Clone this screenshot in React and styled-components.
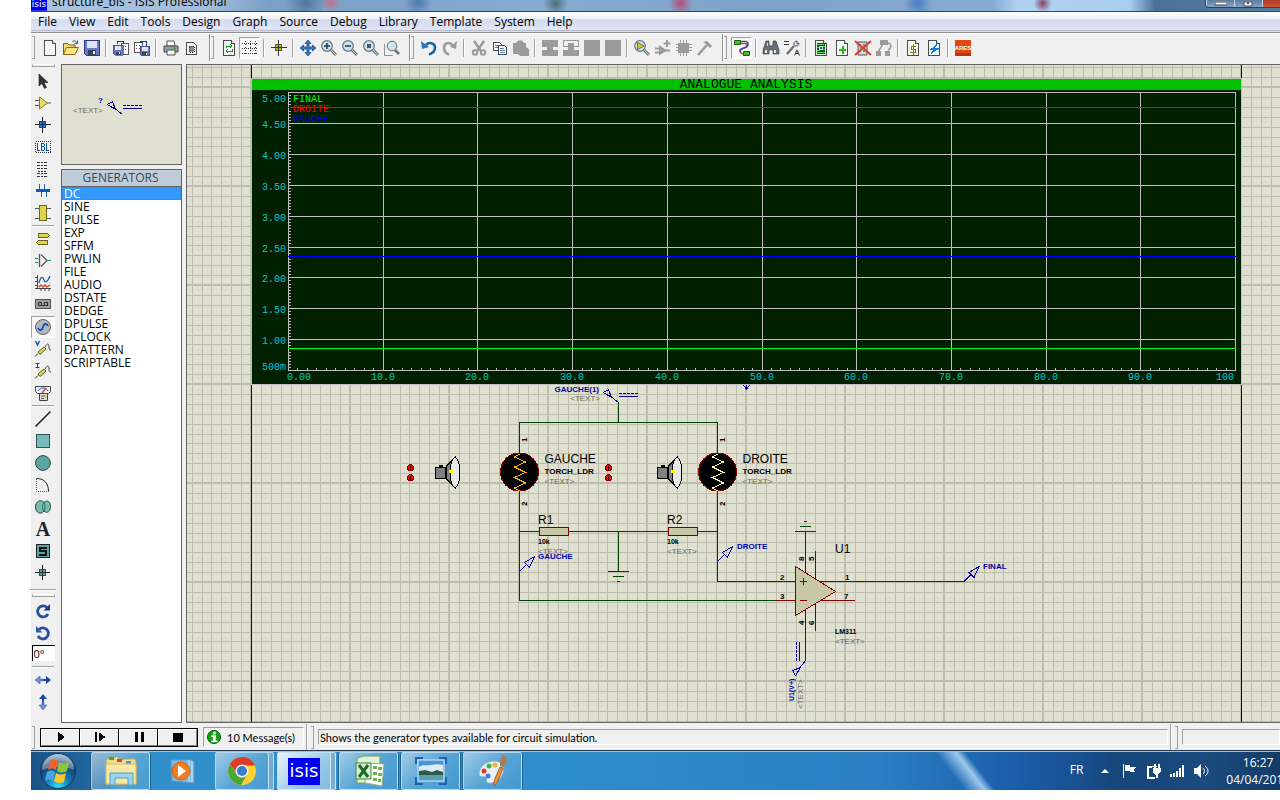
import React from "react"
import styled, { createGlobalStyle, css } from "styled-components"

const GlobalStyle = createGlobalStyle`
  * {
    box-sizing: border-box;
  }
  body {
    margin: 0;
    background: #fff;
    font-family: "Open Sans", "Noto Sans", sans-serif;
    font-size: 12px;
    color: #000;
  }
  button, input {
    font: inherit;
    color: inherit;
  }
`

const menus = ["File", "View", "Edit", "Tools", "Design", "Graph", "Source", "Debug", "Library", "Template", "System", "Help"]

const generators = [
  "DC", "SINE", "PULSE", "EXP", "SFFM", "PWLIN", "FILE", "AUDIO", "DSTATE",
  "DEDGE", "DPULSE", "DCLOCK", "DPATTERN", "SCRIPTABLE"
]

/* ---------- layout ---------- */

const Window = styled.div`
  display: flex;
  flex-direction: column;
  height: 100vh;
  min-height: 600px;
  padding: 0 0 10px 31px;
  overflow: hidden;
`
const TitleBar = styled.header`
  display: flex;
  flex: none;
  align-items: flex-end;
  height: 12px;
  overflow: hidden;
  border-bottom: 1px solid #33475c;
  background:
    radial-gradient(circle at 22% 20%, #52749d 0, transparent 20px),
    radial-gradient(circle at 24% 20%, #b8758f 0, transparent 10px),
    radial-gradient(circle at 31% 20%, #4d7ab0 0, transparent 14px),
    radial-gradient(circle at 42% 30%, #496f77 0, transparent 12px),
    radial-gradient(circle at 52% 30%, #b0507a 0, transparent 12px),
    radial-gradient(circle at 71% 30%, #4a7dc4 0, transparent 14px),
    radial-gradient(circle at 81% 30%, #84435f 0, transparent 9px),
    linear-gradient(90deg, #a9c3df 0, #a3bedb 14%, #7b9fc6 19%, #86a9cf 40%, #7fa3ca 60%, #86aad2 77%, #b0d2f3 79%, #a9cdf0 88%, #4a7198 90%, #547ba2 100%);
`
const AppName = styled.h1`
  flex: 1;
  margin: 0 0 1px 5px;
  font-size: 12px;
  line-height: 16px;
  font-weight: 400;
`
const WindowButtons = styled.div`
  display: flex;
  align-self: flex-start;
  height: 8px;
  border: 1px solid #2c435c;
  border-width: 0 0 1px 1px;
  border-radius: 0 0 0 4px;
  overflow: hidden;
`
const WindowButton = styled.button`
  width: ${p => (p.$close ? 18 : 28)}px;
  height: 8px;
  padding: 0;
  border: 0;
  border-left: 1px solid #c3d5e8;
  background: ${p => (p.$close ? "linear-gradient(#a93a26, #d3573a)" : "linear-gradient(#5d7e9f, #88a9c9)")};

  svg {
    display: block;
    margin: 0 auto;
  }
`
const MenuBar = styled.nav`
  display: flex;
  flex: none;
  gap: 12px;
  height: 21px;
  padding: 0 7px;
  border-bottom: 1px solid #8e8e94;
  background: linear-gradient(#fff 0, #eef2fa 33%, #d5dcee 36%, #e1e6f6 90%, #b2b7c8 92%, #f2f2f2 100%);
`
const MenuItem = styled.a`
  color: #000;
  font-size: 12px;
  line-height: 20px;
  text-decoration: none;
`
const ToolBar = styled.div`
  display: flex;
  flex: none;
  height: 31px;
  padding-bottom: 3px;
  border-top: 1px solid #fff;
  background: #f0f0f0;
`
const ToolGroup = styled.div`
  display: flex;
  align-items: center;

  & + & {
    margin-left: 7px;
    border-left: 1px solid #8f8f8f;
    box-shadow: inset 1px 0 #fff;
  }
`
const Grip = styled.span`
  flex: none;
  width: 3px;
  height: 23px;
  margin: 0 4px 0 ${p => (p.$first ? 0 : 1)}px;
  border: 1px solid #a0a0a0;
  border-left: 0;
`
const Separator = styled.span`
  flex: none;
  width: 2px;
  height: 18px;
  margin: 0 3px;
  border-left: 1px solid #a0a0a0;
  border-right: 1px solid #fff;
`
const ToolButton = styled.button`
  display: flex;
  flex: none;
  align-items: center;
  justify-content: center;
  width: ${p => (p.$side ? 24 : 21)}px;
  height: 22px;
  padding: 0;
  border: 1px solid transparent;
  background: none;
  ${p => p.$on && css`
    border-color: #a0a0a0 #fff #fff #a0a0a0;
    background: #f8f8f8;
  `}
`
const Workspace = styled.main`
  display: flex;
  flex: 1;
  min-height: 0;
  gap: 4px;
  background: #f0f0f0;
`
const SideBar = styled.div`
  display: flex;
  flex-direction: column;
  align-items: center;
  width: 26px;
  margin-left: -1px;
`
const SideGrip = styled.span`
  flex: none;
  width: 23px;
  height: 3px;
  margin: ${p => (p.$lower ? "3px 0" : "0 0 3px")};
  border: 1px solid #a0a0a0;
  border-top-color: #fff;
`
const SideRule = styled.span`
  flex: none;
  align-self: stretch;
  height: 2px;
  margin: ${p => (p.$wide ? "5px 0 0" : "1px 2px")};
  border-top: 1px solid #a0a0a0;
  border-bottom: 1px solid #fff;
`
const AngleInput = styled.input`
  width: 23px;
  height: 16px;
  margin: 1px 0 4px;
  padding: 0 1px;
  border: 1px solid #000;
  border-width: 1px 0 0 1px;
  border-radius: 0;
  background: #fff;
  font-size: 11px;
`
const Selector = styled.aside`
  display: flex;
  flex-direction: column;
  width: 121px;
  gap: 4px;
  margin-left: 1px;
`
const Preview = styled.div`
  flex: none;
  height: 101px;
  border: 1px solid #646464;
  background: #dfe0d0;
`
const PickList = styled.section`
  flex: 1;
  min-height: 0;
  border: 1px solid #646464;
  background: #fff;
`
const PickTitle = styled.h2`
  margin: 0;
  height: 17px;
  padding-right: 2px;
  border-bottom: 1px solid #646464;
  background: #bfcddb;
  color: #3c4650;
  font-size: 12px;
  font-weight: 400;
  line-height: 16px;
  text-align: center;
`
const PickItems = styled.ul`
  margin: 0;
  padding: 0;
  list-style: none;
`
const PickItem = styled.li`
  height: 13px;
  padding-left: 1px;
  border: ${p => (p.$selected ? "1px dotted #cc6600" : "1px solid transparent")};
  background: ${p => (p.$selected ? "#3399ff" : "none")};
  color: ${p => (p.$selected ? "#fff" : "#000")};
  font-size: 12px;
  line-height: 12px;
`
const Editor = styled.div`
  flex: 1;
  min-width: 0;
  overflow: hidden;
  border: 1px solid #646464;
  border-right: 0;
  background: #dfe0d0;

  svg {
    display: block;
    width: 100%;
    height: 100%;
  }
`
const StatusBar = styled.footer`
  display: flex;
  flex: none;
  align-items: center;
  height: 28px;
  padding: 1px 0 0 1px;
  border-bottom: 1px solid #24384c;
  background: #f0f0f0;
  font-family: Lato, "Liberation Sans", sans-serif;
  font-size: 11px;
`
const Transport = styled.div`
  display: flex;
  margin: 0 5px 0 1px;
  border: 1px solid #000;
`
const TransportButton = styled.button`
  display: flex;
  align-items: center;
  justify-content: center;
  width: 39px;
  height: 17px;
  padding: 0;
  border: 1px solid;
  border-color: #fff #808080 #808080 #fff;
  background: #f0f0f0;

  & + & {
    box-shadow: -1px 0 #000;
  }
`
const StatusField = styled.div`
  display: flex;
  flex: ${p => (p.$grow ? "1" : "none")};
  align-items: center;
  gap: 6px;
  width: ${p => p.$width || "auto"};
  height: ${p => (p.$tall ? 20 : 16)}px;
  padding: 0 ${p => (p.$tall ? 3 : 1)}px;
  border: 1px solid;
  border-color: #a0a0a0 #fff #fff #a0a0a0;
  white-space: nowrap;
`
const StatusDivider = styled.span`
  align-self: stretch;
  width: 2px;
  margin: 0 3px 0 2px;
  border-left: 1px solid #a0a0a0;
  border-right: 1px solid #fff;
`
const TaskBar = styled.div`
  display: flex;
  flex: none;
  align-items: center;
  height: 39px;
  overflow: hidden;
  border-top: 1px solid #9cc4e2;
  color: #fff;
  background:
    linear-gradient(52deg, transparent calc(75% - 20px), rgba(170, 210, 245, .9) calc(75% - 4px), transparent calc(75% + 4px)) no-repeat,
    linear-gradient(90deg, #1a5488 0, #1f659c 55px, #3190cb 90px, #2e8ecb 500px, #2b7fc2 68%, #1c60ab 78%, #184f90 84%, #16457a 87%, #1b4b7e 94%, #123a66 100%);
`
const StartButton = styled.button`
  width: 58px;
  height: 38px;
  margin-right: 2px;
  padding: 0 4px 0 0;
  border: 0;
  background: none;

  svg {
    display: block;
    margin: 0 auto;
  }
`
const TaskButton = styled.button`
  display: flex;
  flex: none;
  align-items: center;
  justify-content: center;
  width: 59px;
  height: 38px;
  margin-right: 3px;
  padding: 0;
  border: 1px solid transparent;
  border-radius: 2px;
  background: none;
  ${p => p.$open && css`
    border-color: rgba(210, 235, 250, .75);
    background: linear-gradient(135deg, rgba(255, 255, 255, .55), rgba(255, 255, 255, .2) 50%, rgba(255, 255, 255, .1));
    box-shadow: -1px 0 rgba(20, 70, 110, .6), 1px 0 rgba(20, 70, 110, .6);
  `}
  ${p => p.$active && css`
    background: linear-gradient(135deg, rgba(255, 255, 255, .9), rgba(255, 255, 255, .5) 60%, rgba(255, 255, 255, .4));
  `}
  ${p => p.$stacked && css`
    padding-right: 5px;
    box-shadow: inset -4px 0 rgba(60, 130, 180, .6), inset -5px 0 rgba(230, 245, 255, .8);
  `}
`
const Tray = styled.div`
  display: flex;
  align-items: center;
  gap: 8px;
  margin-left: auto;
  margin-right: -10px;
`
const Language = styled.span`
  margin-right: 6px;
  padding-bottom: 4px;
  font-size: 12px;
`
const Clock = styled.time`
  display: flex;
  flex-direction: column;
  align-items: center;
  margin-left: 9px;
  font-size: 12px;
  line-height: 17px;
`

/* ---------- icons ---------- */

const IconSvg = styled.svg`
  flex: none;
  overflow: visible;
`
const Icon = ({ children, size = 16, smooth }) => (
  <IconSvg width={size} height={size} viewBox="0 0 16 16" fill="none" shapeRendering={smooth ? "auto" : "crispEdges"} aria-hidden="true">
    {children}
  </IconSvg>
)

const Sheet = ({ children, fill = "#f4f7fa" }) => (
  <Icon>
    <path d="M2.500 0.500h8l3 3v12h-11z" fill={fill} stroke="#4c4c4c" />
    <path d="M10.500 0.500v3h3" stroke="#4c4c4c" fill="#c8ccd0" />
    {children}
  </Icon>
)
const Floppy = ({ x = 0, y = 0, s = 1 }) => (
  <g transform={`translate(${x} ${y}) scale(${s})`}>
    <path d="M0.500 0.500h15v15h-13l-2-2z" fill="#6a78c8" stroke="#2c3c80" />
    <path d="M3 1h10v7h-10z" fill="#dfe4f4" />
    <path d="M4 10h8v5h-8z" fill="#394260" />
    <path d="M9 11h2v3h-2z" fill="#fff" />
  </g>
)
const Lens = ({ children }) => (
  <Icon smooth>
    <path d="M10 10l5 5" stroke="#777" strokeWidth="3" />
    <path d="M10 10l5 5" stroke="#c8c8c8" strokeWidth="1" />
    <circle cx="6" cy="6" r="5.300" fill="#c9e2ee" stroke="#667680" strokeWidth="1.200" />
    {children}
  </Icon>
)
const Chip = () => (
  <>
    <path d="M0 4.500h16M0 7.500h16M0 10.500h16M4.500 0v16M7.500 0v16M10.500 0v16" stroke="#9a9a9a" />
    <path d="M2 3h11v10H2z" fill="#9a9a9a" />
  </>
)
const Probe = ({ letter }) => (
  <Icon smooth>
    <path d="M0 15.500l3-3" stroke="#333" />
    <path d="M3 11l6-5 2 2-6 5.500z" fill="#e2dc52" stroke="#5a5620" />
    <path d="M10 6c2-4 4-4 4 0 0 2 0 3 2 3" stroke="#444" />
    {letter === "V"
      ? <path d="M0.500 0l2 4 2-4" stroke="#0a4fa8" strokeWidth="1.400" />
      : <path d="M0.500 0.500h4M2.500 0.500v4M0.500 4.500h4" stroke="#0a4fa8" />}
  </Icon>
)

const fileTools = [
  ["New", <Sheet key="i" />],
  ["Open", <Icon key="i" smooth>
    <path d="M0.500 14.500v-11h4l1.500 1.500h6v3" fill="#f0d878" stroke="#7a5c10" />
    <path d="M0.500 14.500l3-7h12l-3.500 7z" fill="#ffe680" stroke="#8a6c18" />
    <path d="M9 2c2-2 4-1 5 1m.5-2.500v3h-3" stroke="#2a5a8c" />
  </Icon>],
  ["Save", <Icon key="i"><Floppy /></Icon>],
  null,
  ["Import section", <Icon key="i">
    <path d="M8.500 3.500h7v11h-7z" fill="#fff" stroke="#555" />
    <path d="M10 6h1v1h-1zM12 6h1v1h-1zM10 9h1v1h-1zM12 9h1v1h-1z" fill="#d22" />
    <Floppy y={5} s={0.65} />
    <path d="M4.500 4v-2.500h6v2" stroke="#17427c" />
  </Icon>],
  ["Export section", <Icon key="i">
    <path d="M0.500 2.500h8v10h-8z" fill="#fff" stroke="#555" />
    <path d="M2 5h1v1h-1zM5 5h1v1h-1zM2 8h1v1h-1zM5 8h1v1h-1z" fill="#d22" />
    <Floppy x={6} y={6} s={0.62} />
    <path d="M6.500 2.500v-1h6v4" stroke="#17427c" />
  </Icon>],
  null,
  ["Print", <Icon key="i" smooth>
    <path d="M4 1h7l1 5h-8z" fill="#fff" stroke="#555" />
    <path d="M1 6h14v6h-14z" fill="#9aa0a8" stroke="#444" />
    <path d="M4 10h8v5h-8z" fill="#f5f5f5" stroke="#555" />
    <path d="M10 7.500h3v2h-3z" fill="#2faa2f" />
  </Icon>],
  ["Set area", <Icon key="i">
    <path d="M2.500 2.500h7l3 3v9h-10z" fill="#f4f7fa" stroke="#4c4c4c" />
    <path d="M5 6h5v6h-5z" fill="#888" stroke="#333" strokeDasharray="1 1" />
  </Icon>]
]

const viewTools = [
  ["Redraw", <Sheet key="i">
    <path d="M5 8v-2h5M9 4l2 2-2 2M11 9v2h-5M7 9l-2 2 2 2" stroke="#1e9a1e" strokeWidth="1" />
  </Sheet>],
  ["Toggle grid", <Icon key="i">
    <path d="M0 3.500h16M0 8.500h16M0 13.500h16" stroke="#333" strokeDasharray="1 1" />
    <path d="M3.500 1v15M8.500 1v15M13.500 1v15" stroke="#333" strokeDasharray="1 2" />
  </Icon>, true],
  null,
  ["Origin", <Icon key="i">
    <path d="M4.500 4.500h6v6h-6z" fill="#b8b020" stroke="#6a6410" />
    <path d="M7.500 0v16M0 7.500h16" stroke="#333" />
  </Icon>],
  null,
  ["Pan", <Icon key="i" smooth>
    <path d="M8 0l3 3.500H9V7h3.500V5L16 8l-3.500 3V9H9v3.500h2L8 16l-3-3.500h2V9H3.500v2L0 8l3.500-3v2H7V3.500H5z" fill="#2f7fd0" stroke="#123f78" strokeWidth=".7" />
  </Icon>],
  ["Zoom in", <Lens key="i"><path d="M3 6h6M6 3v6" stroke="#334" strokeWidth="1.500" /></Lens>],
  ["Zoom out", <Lens key="i"><path d="M3 6h6" stroke="#334" strokeWidth="1.500" /></Lens>],
  ["Zoom all", <Lens key="i"><path d="M4 4h4v4h-4z" fill="#556" /></Lens>],
  ["Zoom area", <Icon key="i" smooth>
    <path d="M0.500 4.500v11h9" stroke="#333" strokeDasharray="1 1" />
    <path d="M11 10l4 4" stroke="#777" strokeWidth="3" />
    <circle cx="8" cy="6" r="4.800" fill="#cfe6f0" stroke="#667" />
  </Icon>]
]

const gray = "#9b9b9b"
const editTools = [
  ["Undo", <Icon key="i" smooth>
    <path d="M4 6c4-5 10-3 10 1.500 0 4-3 6-6 7" stroke="#1f5fa8" strokeWidth="2.600" />
    <path d="M0 1l1 8 7-2z" fill="#2f74c0" />
  </Icon>],
  ["Redo", <Icon key="i" smooth>
    <path d="M11 6c-4-5-9-3-9 1.500 0 4 2 6 5 7" stroke={gray} strokeWidth="2.600" />
    <path d="M15 1l-1 8-6-2z" fill={gray} />
  </Icon>],
  null,
  ["Cut", <Icon key="i" smooth>
    <path d="M3 1l7 10M13 1l-7 10" stroke={gray} strokeWidth="2.500" />
    <circle cx="4" cy="12.500" r="2.200" stroke={gray} strokeWidth="2" />
    <circle cx="12" cy="12.500" r="2.200" stroke={gray} strokeWidth="2" />
  </Icon>],
  ["Copy", <Icon key="i">
    <path d="M1.500 2.500h6l2 2v6h-8z" fill="#fff" stroke="#3c4c68" />
    <path d="M6.500 5.500h6l2 2v7h-8z" fill="#fff" stroke="#3c4c68" />
    <path d="M3 5.500h3M3 7.500h3M8 8.500h4M8 10.500h5M8 12.500h5" stroke="#6a7a96" />
  </Icon>],
  ["Paste", <Icon key="i" smooth><path d="M0 3h3l2-2.500h4l2 2.500h2v4l3 2v7h-9l-2-2H0z" fill={gray} /></Icon>],
  null,
  ["Block copy", <Icon key="i"><path d="M0 0h16v7h-5v3h5v6H0v-6h5V7H0z" fill={gray} /></Icon>],
  ["Block move", <Icon key="i">
    <path d="M0.500 0.500h15v6h-15z" stroke={gray} />
    <path d="M5 3h6v7h5v6H0v-6h5z" fill={gray} />
  </Icon>],
  ["Block rotate", <Icon key="i"><path d="M0 0h16v16H0z" fill={gray} /></Icon>],
  ["Block delete", <Icon key="i"><path d="M0 0h16v16H0z" fill={gray} /></Icon>],
  null,
  ["Pick parts", <Lens key="i"><path d="M3.500 2.500l6.500 3.500-6.500 3.500z" fill="#d8c840" stroke="#665c10" strokeWidth=".8" /></Lens>],
  ["Make device", <Icon key="i" smooth>
    <path d="M0 8.500h4M0 12.500h4M9 10.500h6M12 0v7M8.500 3.500h7" stroke={gray} strokeWidth="2" />
    <path d="M4 5l8 5.500-8 5z" fill={gray} />
  </Icon>],
  ["Packaging tool", <Icon key="i"><Chip /></Icon>],
  ["Decompose", <Icon key="i" smooth>
    <path d="M1 15L10 5" stroke={gray} strokeWidth="2.600" />
    <path d="M6 2l4-1 5 5-2 2-3-3z" fill={gray} />
  </Icon>]
]

const designTools = [
  ["Wire autorouter", <Icon key="i" smooth>
    <path d="M6 3.500h4c4 0 4 4 0 4.500s-6 5 0 6" stroke="#e03c10" strokeWidth="1.500" />
    <path d="M7 1.500h5c3 1 3 5-2 6.500s-5 3-3 4" stroke="#1c5fb4" strokeWidth="1.500" />
    <path d="M0.500 0.500h6v4h-6z" fill="#4cb82c" stroke="#1c6010" />
    <path d="M9.500 11.500h6v4h-6z" fill="#4cb82c" stroke="#1c6010" />
  </Icon>, true],
  null,
  ["Search and tag", <Icon key="i" smooth>
    <path d="M3 1h3v3l1 2h2l1-2V1h3l3 9v4h-6v-4H6v4H0v-4z" fill="#66707c" stroke="#333" strokeWidth=".6" />
    <path d="M2 10h2v3H2zM11 10h2v3h-2zM4 3h1v3H4z" fill="#dfe6ec" />
  </Icon>],
  ["Property assignment", <Icon key="i" smooth>
    <path d="M0 1.500h5M0 4.500h5" stroke="#333" />
    <path d="M3 14l7-8" stroke="#667" strokeWidth="2" />
    <path d="M13 1c-4 0-4 5-1 5s3-2 3-3l-2 1z" fill="#dde" stroke="#556" />
    <path d="M10.500 15.500l2.500-5.500 2.500 5.500M11.500 13.500h3" stroke="#333" />
  </Icon>],
  null,
  ["Design explorer", <Sheet key="i" fill="#e4ece4">
    <path d="M4 3h8v11H4z" fill="#244824" />
    <path d="M4 4.500h7M4 7.500h3M4 10.500h3M4 12.500h8M9 6.500h3M9 9.500h3" stroke="#3fe03f" />
    <path d="M6 6h4v4H6z" fill="#bcd8f0" />
    <path d="M7 7h2v2H7z" fill="#2c5c9c" />
  </Sheet>],
  ["New sheet", <Sheet key="i"><path d="M5 10h7M8.500 6v8" stroke="#35b010" strokeWidth="2" /></Sheet>],
  ["Remove sheet", <Icon key="i" smooth>
    <path d="M3 2h9v13H3z" fill="#d4d8dc" stroke="#555" />
    <path d="M5 5h1M8 5h2M5 8h2M9 8h1M5 11h1M8 11h2" stroke="#333" />
    <path d="M0 1l16 14M16 1L0 15" stroke="#d4452c" strokeWidth="2" />
  </Icon>],
  ["Exit to parent", <Icon key="i" smooth>
    <path d="M4 0h8v5H4zM0 11h5v5H0zM9 11h5v5H9z" fill={gray} />
    <path d="M2.500 11l4-6M11 3c5 0 5 5 1 7" stroke={gray} strokeWidth="1.500" />
  </Icon>],
  null,
  ["Bill of materials", <Sheet key="i" fill="#f6f6ea">
    <path d="M11 6.500H6v3h4v3H5M8 4v11" stroke="#8a7a1c" />
  </Sheet>],
  ["Electrical rules check", <Sheet key="i" fill="#e8f2fa">
    <path d="M11 5l-5 4h5l-6 4" stroke="#1478d8" strokeWidth="1.500" />
  </Sheet>],
  null,
  ["ARES", <Icon key="i">
    <path d="M0 0h16v16H0z" fill="#e0481c" />
    <path d="M0 13h16v3H0z" fill="#b83410" />
    <text x="8" y="10" textAnchor="middle" fill="#fff" fontSize="6" fontWeight="700" fontFamily="Liberation Sans, sans-serif">ARES</text>
  </Icon>]
]

const modeTools = [
  ["Selection", <Icon key="i" smooth><path d="M4 1v12l3-2.500 2.500 5 2-1-2.500-5h4z" fill="#333" stroke="#222" strokeWidth=".6" /></Icon>],
  ["Component", <Icon key="i" smooth>
    <path d="M0 5.500h5M0 10.500h5M11 8h5" stroke="#555" />
    <path d="M4.500 2l8 6-8 6z" fill="#e2dc66" stroke="#8a7a1c" />
  </Icon>],
  ["Junction dot", <Icon key="i">
    <path d="M7.500 0v16M0 7.500h16" stroke="#222" />
    <path d="M4.500 4.500h6v6h-6z" fill="#1f74cc" stroke="#0e4688" />
    <path d="M7.500 5v6M5 7.500h6" stroke="#0c3466" />
  </Icon>],
  ["Wire label", <Icon key="i">
    <path d="M0.500 2.500h15v11h-15z" stroke="#333" strokeDasharray="1 1" />
    <path d="M2.500 4v7.500h2.500M6.500 4.500h2l1 1v1l-1 1h-2h2l1 1v2l-1 1h-2zM11.500 4v7.500h2.500" stroke="#1458a8" />
  </Icon>],
  ["Text script", <Icon key="i">
    <path d="M2 1.500h11M2 4.500h11M2 7.500h11M2 12.500h11M2 15.500h11" stroke="#333" strokeDasharray="3 1 2 1" />
    <path d="M3 10.500h8" stroke="#333" strokeDasharray="2 1" />
  </Icon>],
  ["Buses", <Icon key="i">
    <path d="M4.500 1v7M9.500 1v7M6.500 8v6M11.500 8v6" stroke="#1c62b4" strokeWidth="1" />
    <path d="M1 6h14v3H1z" fill="#1058b4" />
  </Icon>],
  ["Subcircuit", <Icon key="i">
    <path d="M0 3.500h4M12 3.500h4M0 13.500h4M12 13.500h4" stroke="#555" />
    <path d="M4.500 0.500h7v15h-7z" fill="#dcd44c" stroke="#6a6418" />
  </Icon>],
  null,
  ["Terminals", <Icon key="i">
    <path d="M3.500 2.500h9l2 2-2 2h-9z" fill="#dcd44c" stroke="#6a6418" />
    <path d="M12.500 9.500h-9l-2 2 2 2h9z" fill="#dcd44c" stroke="#6a6418" />
  </Icon>],
  ["Device pins", <Icon key="i" smooth>
    <path d="M0 5.500h3M0 9.500h3M12 7.500h4" stroke="#1c8a7a" />
    <path d="M4.500 1v13M6 1.500l6 6-6 6" stroke="#555" strokeWidth="1.300" />
  </Icon>],
  ["Graph", <Icon key="i" smooth>
    <path d="M2.500 0v14M0 13.500h16M0 2.500h2M0 6.500h2M0 10.500h2M6 14v2M10 14v2M14 14v2" stroke="#444" />
    <path d="M4 8c2-8 4-6 5-3s3 3 6-4" stroke="#1458b4" strokeWidth="1.300" />
    <path d="M4 12l2-2 2 2 2-2 2 2 3-2" stroke="#d8401c" strokeWidth="1.300" />
  </Icon>],
  ["Tape recorder", <Icon key="i">
    <path d="M0.500 2.500h15v9h-15z" fill="#9c9c9c" stroke="#555" />
    <path d="M3.500 8.500v-3h3v3M9.500 8.500v-3h3v3M4 8.500h8" stroke="#333" />
  </Icon>],
  ["Generator", <Icon key="i" smooth>
    <circle cx="8" cy="8" r="7.500" fill="#b2b6bc" stroke="#666" />
    <path d="M3 9c1 3 4 3 5-1s4-4 5-1" stroke="#0c4cb4" strokeWidth="1.600" />
  </Icon>, true],
  ["Voltage probe", <Probe key="i" letter="V" />],
  ["Current probe", <Probe key="i" letter="I" />],
  ["Instruments", <Icon key="i" smooth>
    <path d="M0.500 1.500h15v5l-2 2h-11l-2-2z" fill="#e8eef4" stroke="#444" />
    <path d="M3 6c2-4 8-4 10 0" stroke="#1c6ab8" />
    <path d="M7 8l4-5" stroke="#d83c1c" strokeWidth="1.300" />
    <path d="M4.500 8.500h8v7h-8z" fill="#ddd" stroke="#444" />
    <path d="M6 11h4M6 13.500h3" stroke="#555" />
    <path d="M10 11h2v2h-2z" fill="#d8cc30" />
  </Icon>],
  null,
  ["Line", <Icon key="i" smooth><path d="M0.500 15.500l15-15" stroke="#222" strokeWidth="1.600" /></Icon>],
  ["Box", <Icon key="i"><path d="M1.500 1.500h13v13h-13z" fill="#76bcb8" stroke="#2c5452" /></Icon>],
  ["Circle", <Icon key="i" smooth><circle cx="8" cy="8" r="7.400" fill="#5ca4a0" stroke="#2c4846" /></Icon>],
  ["Arc", <Icon key="i" smooth>
    <path d="M1.500 2v12.500h12" stroke="#1c6ab8" strokeDasharray="1 1" />
    <path d="M1.500 1.500c8 0 12 5 12 13" stroke="#222" />
  </Icon>],
  ["Closed path", <Icon key="i" smooth>
    <path d="M9 3.500C6 0 0.500 2 0.500 8s5.500 8 8.500 4c3 3 6.500 0.500 6.500-4.500S12 0.500 9 3.500z" fill="#76bcb0" stroke="#2c4846" />
    <path d="M9 3.500c-2 2-2 6.500 0 8.500 1.500-2 1.500-6.500 0-8.500z" stroke="#2c6c60" />
  </Icon>],
  ["Text", <Icon key="i" smooth>
    <text x="8" y="15" textAnchor="middle" fill="#222" fontSize="20" fontWeight="700" fontFamily="Liberation Serif, serif">A</text>
  </Icon>],
  ["Symbols", <Icon key="i">
    <path d="M1.500 1.500h13v13h-13z" fill="#5ca4a0" stroke="#222" />
    <path d="M12 4.500H5v3h6v4H4" stroke="#111" strokeWidth="2" />
  </Icon>],
  ["Markers", <Icon key="i">
    <path d="M7.500 0v15M0 7.500h15" stroke="#222" />
    <path d="M4.500 4.500h6v6h-6z" fill="#5ca4a0" stroke="#2c5452" />
    <path d="M7.500 5v6M5 7.500h6" stroke="#1c3432" />
  </Icon>]
]

const rotateTools = [
  ["Rotate clockwise", <Icon key="i" smooth>
    <path d="M12 4.500a5.500 5.500 0 1 0 1 6.500" stroke="#2850a0" strokeWidth="2.800" />
    <path d="M15 1v6.500H8.500z" fill="#1c3c8c" />
  </Icon>],
  ["Rotate anti-clockwise", <Icon key="i" smooth>
    <path d="M4 4.500a5.500 5.500 0 1 1-1 6.500" stroke="#2850a0" strokeWidth="2.800" />
    <path d="M1 1v6.500h6.500z" fill="#2c5cb8" />
  </Icon>]
]
const mirrorTools = [
  ["X-mirror", <Icon key="i" smooth>
    <path d="M0 8l5-4v3h3v2H5v3z" fill="#6c90d8" stroke="#3c5ca8" strokeWidth=".6" />
    <path d="M16 8l-5-4v3H8v2h3v3z" fill="#1c44a0" />
  </Icon>],
  ["Y-mirror", <Icon key="i" smooth>
    <path d="M8 0l4 5H9v3H7V5H4z" fill="#1c44a0" />
    <path d="M8 16l4-5H9V8H7v3H4z" fill="#6c90d8" stroke="#3c5ca8" strokeWidth=".6" />
  </Icon>]
]

const Tools = ({ items, side }) =>
  items.map((tool, i) => {
    if (!tool) return side ? <SideRule key={i} /> : <Separator key={i} />
    return (
      <ToolButton key={i} aria-label={tool[0]} $on={tool[2]} $side={side}>
        {tool[1]}
      </ToolButton>
    )
  })

/* ---------- schematic ---------- */

const WIRE = "#004000"
const PIN = "#800000"
const INK = "#0000a8"

const Label = styled.text`
  font-family: "Liberation Sans", Arial, sans-serif;
  font-size: ${p => p.$size || 8}px;
  font-weight: ${p => (p.$bold ? 700 : 400)};
  fill: ${p => p.$color || "#000"};
`
const GraphText = styled.text`
  font-family: "Liberation Mono", monospace;
  font-size: ${p => p.$size || 10}px;
  fill: ${p => p.$color || "#00c8c8"};
`
const Placeholder = props => <Label $color="#686868" {...props}>&lt;TEXT&gt;</Label>

// a line every 9.9px, a double one on each tenth
const gridPath = () => {
  let d = ""
  for (let k = -7; k < 240; k++) {
    const x = Math.round(251 + k * 9.9)
    const w = k % 10 === 0 ? 2 : 1
    d += `M${x + 1 - w} 0h${w}v1600h-${w}z`
  }
  for (let k = -2; k < 150; k++) {
    const y = Math.round(87 + k * 9.9)
    const w = k % 10 === 0 ? 2 : 1
    d += `M180 ${y + 1 - w}h2400v${w}h-2400z`
  }
  return d
}

// (x, y) is the connection point
const GeneratorMark = ({ x, y, turn = 0 }) => (
  <g transform={`translate(${x} ${y}) rotate(${turn})`} stroke={INK} fill="none">
    <path d="M0 0L-9 -7M-15 -10l5 -3l3 8z" />
    <path d="M0 -9h19" strokeDasharray="3 1" />
    <path d="M0 -6h19" />
  </g>
)
const ProbeMark = ({ x, y }) => (
  <path d={`M${x} ${y}l7 -7M${x + 15} ${y - 15}l-10 6l5 5z`} stroke={INK} fill="none" />
)
const Lamp = ({ x, y }) => (
  <g transform={`translate(${x} ${y})`} stroke="#000">
    <path d="M11 -6l9 -9v30l-9 -9z" fill="#808080" />
    <path d="M0.500 -5.500h10v11h-10z" fill="#808080" />
    <path d="M4 -8h4v2h-4z" fill="#000" stroke="none" />
    <ellipse cx="20" cy="0" rx="5" ry="15" fill="#e8e8e8" />
    <circle cx="16" cy="-1" r="2" fill="#ff0" stroke="none" />
  </g>
)
const Arrows = ({ x }) => (
  <g>
    {[467, 477].map(y => (
      <g key={y}>
        <circle cx={x} cy={y + 0.5} r="3" fill="#f00" stroke={PIN} />
        <path d={`M${x} ${y - 1}v4`} stroke="#400" />
      </g>
    ))}
  </g>
)
const Ldr = ({ x, name, color }) => (
  <g>
    <path d={`M${x} 443v11M${x} 490v12`} stroke={PIN} />
    <circle cx={x} cy="472" r="19" fill="#000" stroke={PIN} />
    <path d={`M${x} 454l-5 3l11 5l-11 5l11 5.500l-11 5l11 5.500l-11 5l5 3`} stroke={color} fill="none" />
    <Label transform={`translate(${x + 7} 442) rotate(-90)`} $bold>1</Label>
    <Label transform={`translate(${x + 7} 506) rotate(-90)`} $bold>2</Label>
    <Label x={x + 25} y="463" $size={12}>{name}</Label>
    <Label x={x + 25} y="474" $bold>TORCH_LDR</Label>
    <Placeholder x={x + 25} y="484" />
  </g>
)
const Resistor = ({ x, name }) => (
  <g>
    <path d={`M${x - 10} 531.500h10M${x + 30} 531.500h10`} stroke={PIN} />
    <rect x={x + 0.5} y="527.500" width="29" height="8" fill="#c8c8a8" stroke={PIN} />
    <Label x={x - 1} y="524" $size={12}>{name}</Label>
    <Label x={x - 1} y="544" $bold $size={7}>10k</Label>
    <Placeholder x={x - 1} y="554" />
  </g>
)

const yAxis = ["5.00", "4.50", "4.00", "3.50", "3.00", "2.50", "2.00", "1.50", "1.00", "500m"]
const xAxis = ["0.00", "10.0", "20.0", "30.0", "40.0", "50.0", "60.0", "70.0", "80.0", "90.0", "100"]

const Graph = () => {
  const gx = i => Math.round(288 + i * 94.7)
  const gy = i => Math.round(92 + i * 30.9)
  let lines = ""
  xAxis.forEach((_, i) => { lines += `M${gx(i)}.500 92v279` })
  yAxis.forEach((_, i) => { lines += `M288 ${gy(i)}.500h948` })
  for (let i = 1; i < 100; i++) lines += `M${Math.round(288 + i * 9.47)}.500 368v3`
  for (let i = 1; i < 90; i++) lines += `M288 ${Math.round(92 + i * 3.09)}.500h3`
  return (
    <g>
      <path d="M251 78h991v307h-991z" fill="#c0c0c0" />
      <path d="M252 79h989v305h-989z" fill="#002000" />
      <path d="M252 79h989v11h-989z" fill="#00c000" />
      <GraphText x="746" y="88" textAnchor="middle" $size={13} $color="#000">ANALOGUE ANALYSIS</GraphText>
      <path d={lines} stroke="#c0c0c0" />
      {yAxis.map((t, i) => (
        <GraphText key={t} x="286" y={i === 0 ? 102 : i === 9 ? 370 : gy(i) + 5} textAnchor="end">{t}</GraphText>
      ))}
      {xAxis.map((t, i) => (
        <GraphText key={t} x={i === 0 ? 287 : i === 10 ? 1234 : gx(i)} y="380" textAnchor={i === 0 ? "start" : i === 10 ? "end" : "middle"}>{t}</GraphText>
      ))}
      <GraphText x="293" y="102" $color="#00ff00">FINAL</GraphText>
      <GraphText x="293" y="112" $color="#ff0000">DROITE</GraphText>
      <GraphText x="293" y="122" $color="#0000ff">GAUCHE</GraphText>
      <path d="M288 107.500h948" stroke="#ff0000" />
      <path d="M288 256.500h948" stroke="#0000ff" />
      <path d="M288 348.500h948" stroke="#00ff00" />
    </g>
  )
}

const Schematic = () => (
  <svg shapeRendering="crispEdges" role="img" aria-label="Schematic">
    <g transform="translate(-187 -65)">
      <path d={gridPath()} fill="#bdbdae" />
      <path d="M251.500 0v1600M1241.500 0v1600" stroke="#000080" />
      <Graph />

      <path
        d="M618.500 402v20M519.500 443v-20.500h198v20.500M519.500 502v98.500h256M717.500 502v79.500h58M519 531.500h10M579 531.500h79M708 531.500h10M618.500 531v40M608 571.500h21M613 576.500h11M617 581.500h3M795 531.500h21M800 526.500h11M804 521.500h3M805.500 531v20M855 581.500h109M805.500 631v29"
        stroke={WIRE}
        fill="none"
      />
      <path d="M746.500 385v5M743 385l3.500 4l3.500 -4" stroke={INK} fill="none" />

      <GeneratorMark x={618.5} y={402.5} />
      <Label x="599" y="392" textAnchor="end" $bold $color={INK}>GAUCHE(1)</Label>
      <Placeholder x="600" y="401" textAnchor="end" />

      <Arrows x={410.5} />
      <Arrows x={608.5} />
      <Lamp x={435} y={472.5} />
      <Lamp x={657} y={472.5} />
      <Ldr x={519.5} name="GAUCHE" color="#ffb400" />
      <Ldr x={717.5} name="DROITE" color="#ffff9c" />
      <Resistor x={539} name="R1" />
      <Resistor x={668} name="R2" />

      <ProbeMark x={519.5} y={571.5} />
      <Label x="538" y="559" $bold $color={INK}>GAUCHE</Label>
      <ProbeMark x={717.5} y={561.5} />
      <Label x="737" y="549" $bold $color={INK}>DROITE</Label>
      <ProbeMark x={964} y={581.5} />
      <Label x="983" y="569" $bold $color={INK}>FINAL</Label>

      <path d="M775 581.500h20M775 600.500h20M820 581.500h35M820 600.500h35M805.500 551v80M815.500 551v80" stroke={PIN} />
      <path d="M795.500 566.500l40 25l-40 24z" fill="#c8c8a8" stroke={PIN} />
      <path d="M800 581.500h7M803.500 578v7M800 600.500h7" stroke={PIN} />
      <Label x="780" y="580" $bold>2</Label>
      <Label x="780" y="599" $bold>3</Label>
      <Label x="845" y="580" $bold>1</Label>
      <Label x="844" y="599" $bold>7</Label>
      <Label transform="translate(804 561) rotate(-90)" $bold>8</Label>
      <Label transform="translate(814 561) rotate(-90)" $bold>5</Label>
      <Label transform="translate(804 625) rotate(-90)" $bold>4</Label>
      <Label transform="translate(814 625) rotate(-90)" $bold>6</Label>
      <Label x="835" y="553" $size={12}>U1</Label>
      <Label x="835" y="634" $bold $size={7}>LM311</Label>
      <Placeholder x="835" y="644" />

      <GeneratorMark x={805.5} y={660.5} turn={-90} />
      <Label transform="translate(794 701) rotate(-90)" $bold $size={7} $color={INK}>U1(V+)</Label>
      <Placeholder transform="translate(803 709) rotate(-90)" />
    </g>
  </svg>
)

/* ---------- task bar pictures ---------- */

const StartOrb = () => (
  <svg width="38" height="38" viewBox="0 0 38 38" aria-hidden="true">
    <defs>
      <radialGradient id="orb" cx="50%" cy="95%" r="90%">
        <stop offset="0" stopColor="#2fe0ff" />
        <stop offset=".4" stopColor="#1478b4" />
        <stop offset=".75" stopColor="#12406c" />
        <stop offset="1" stopColor="#7fa2c0" />
      </radialGradient>
    </defs>
    <circle cx="19" cy="19" r="17.500" fill="url(#orb)" stroke="#0d3558" />
    <path d="M3 18a16 16 0 0 1 32 0c-8-4-24-4-32 0z" fill="#fff" opacity=".35" />
    <path d="M11 9c3-2 5-2 8 0l-2 9c-3-2-5-2-8 0z" fill="#f0642c" />
    <path d="M20 10c3 2 6 2 10 0l-2 9c-4 2-7 2-10 0z" fill="#90c83c" />
    <path d="M8 20c3-2 5-2 8 0l-2 9c-3-2-5-2-8 0z" fill="#4ca4e4" />
    <path d="M17 21c3 2 6 2 10 0l-2 9c-4 2-7 1-10-1z" fill="#fcc830" />
  </svg>
)
const Explorer = () => (
  <svg width="34" height="32" viewBox="0 0 34 32" aria-hidden="true">
    <path d="M2 5l4-3h8l2 3 4-1h11l1 3v22H2z" fill="#f2dc8c" stroke="#c8a850" />
    <path d="M5 2h5v3H5z" fill="#2cb42c" />
    <path d="M13 4h5v3h-5z" fill="#d8442c" />
    <path d="M22 6h5v3h-5z" fill="#3c9ce0" />
    <path d="M2 9h30v20H2z" fill="#f8e8a4" stroke="#d8bc64" />
    <path d="M6 30V18h23v12h-5v-7H11v7z" fill="#9cd4ec" stroke="#4ca0c8" />
  </svg>
)
const MediaPlayer = () => (
  <svg width="30" height="30" viewBox="0 0 30 30" aria-hidden="true">
    <path d="M3 4h20l3 2v21l-22-2z" fill="#7cbce4" stroke="#5c9ccc" />
    <path d="M21 4v22M24 5v21" stroke="#d4ecf8" />
    <circle cx="13" cy="15" r="9" fill="#f07c1c" stroke="#d86010" />
    <path d="M10 9l8 6-8 6z" fill="#fff" />
  </svg>
)
const Chrome = () => (
  <svg width="30" height="30" viewBox="0 0 30 30" aria-hidden="true">
    <circle cx="15" cy="15" r="14" fill="#fcd030" />
    <path d="M2.900 8A14 14 0 0 1 28 9.500H15A6 6 0 0 0 9.500 17z" fill="#dc3c28" />
    <path d="M2.900 8A14 14 0 0 0 14 29l6-10.500A6 6 0 0 1 9.500 18z" fill="#48a83c" />
    <circle cx="15" cy="15" r="6.500" fill="#f4f4f4" />
    <circle cx="15" cy="15" r="5" fill="#3c7ccc" />
  </svg>
)
const Isis = ({ width = 32, height = 27 }) => (
  <svg width={width} height={height} viewBox="0 0 32 27" aria-hidden="true">
    <path d="M0 0h32v27H0z" fill="#0000f0" />
    <text x="16" y="19" textAnchor="middle" fill="#fff" fontSize="18" fontFamily="DejaVu Sans, sans-serif">isis</text>
  </svg>
)
const Excel = () => (
  <svg width="32" height="32" viewBox="0 0 32 32" aria-hidden="true">
    <path d="M4 3l7-2h16v27H4z" fill="#e4f0dc" stroke="#68a84c" />
    <path d="M13 8l18 1-2 22-17-3z" fill="#fff" stroke="#88b470" />
    <path d="M20 11h4v3h-4zM25 12h4v3h-4zM20 17h4v3h-4zM25 18h4v3h-4zM20 23h4v3h-4zM25 24h3v3h-3z" fill="#70b058" />
    <path d="M3 8h15v16H3z" fill="#d8ecd0" stroke="#3c8838" />
    <path d="M6 10l9 12M15 10L6 22" stroke="#1c6c28" strokeWidth="3" />
  </svg>
)
const Photo = () => (
  <svg width="32" height="28" viewBox="0 0 32 28" aria-hidden="true">
    <path d="M3 3h26v21H3z" fill="#4c94d4" stroke="#dcecf8" />
    <path d="M4 10c4-3 8-1 12-2s8-1 12 0v7H4z" fill="#dceaf6" />
    <path d="M4 14l6-1 7 2 5-2 6 2v3H4z" fill="#2c5c48" />
    <path d="M4 18h24v5H4z" fill="#5c9cb4" />
    <path d="M1 7V1h7M24 1h7v6M1 20v7h7M24 27h7v-7" stroke="#1c64b0" strokeWidth="2" fill="none" />
  </svg>
)
const Paint = () => (
  <svg width="34" height="34" viewBox="0 0 34 34" aria-hidden="true">
    <path d="M3 20C3 12 11 7 18 7s11 5 9 12-9 11-15 10c-3-1 0-5-3-6s-6 1-6-3z" fill="#e8f0f8" stroke="#8cb0d0" />
    <circle cx="8" cy="17" r="2.500" fill="#e03c2c" />
    <circle cx="13" cy="12" r="2.500" fill="#48b03c" />
    <circle cx="19" cy="11" r="2.500" fill="#f0b42c" />
    <circle cx="12" cy="22" r="2.500" fill="#3c7cd4" />
    <path d="M18 32c-1-3 1-8 6-19l3 1c-4 11-6 16-9 18z" fill="#e09444" stroke="#a86020" />
    <path d="M24 12c0-4 0-8 3-11 3 1 4 3 4 5-1 4-3 5-4 7z" fill="#a87c50" />
  </svg>
)

const App = () => (
  <>
    <GlobalStyle />
    <Window>
      <TitleBar>
        <Isis width={16} height={14} />
        <AppName>structure_bis - ISIS Professional</AppName>
        <WindowButtons>
          <WindowButton aria-label="Minimize"><svg width="12" height="4"><path d="M0 0h12v3H0z" fill="#fff" stroke="#445" /></svg></WindowButton>
          <WindowButton aria-label="Restore"><svg width="12" height="5"><path d="M1 0h8v4H1z" fill="#fff" stroke="#445" /><path d="M4 0h2v2H4z" fill="#445" /></svg></WindowButton>
          <WindowButton aria-label="Close" $close />
        </WindowButtons>
      </TitleBar>
      <MenuBar>
        {menus.map(name => <MenuItem key={name} href="#">{name}</MenuItem>)}
      </MenuBar>
      <ToolBar>
        <ToolGroup><Grip /><Tools items={fileTools} /></ToolGroup>
        <ToolGroup><Grip /><Tools items={viewTools} /></ToolGroup>
        <ToolGroup><Grip /><Tools items={editTools} /></ToolGroup>
        <ToolGroup><Grip /><Tools items={designTools} /></ToolGroup>
      </ToolBar>
      <Workspace>
        <SideBar>
          <SideGrip />
          <Tools items={modeTools} side />
          <SideRule $wide />
          <SideGrip $lower />
          <Tools items={rotateTools} side />
          <AngleInput aria-label="Rotation angle" defaultValue="0°" />
          <SideRule />
          <Tools items={mirrorTools} side />
        </SideBar>
        <Selector>
          <Preview>
            <svg width="119" height="99" shapeRendering="crispEdges" role="img" aria-label="Preview">
              <GeneratorMark x={60.5} y={49.5} />
              <Label x="36" y="38" $bold $color={INK}>?</Label>
              <Placeholder x="11" y="48" />
            </svg>
          </Preview>
          <PickList>
            <PickTitle>GENERATORS</PickTitle>
            <PickItems>
              {generators.map((name, i) => <PickItem key={name} $selected={i === 0}>{name}</PickItem>)}
            </PickItems>
          </PickList>
        </Selector>
        <Editor><Schematic /></Editor>
      </Workspace>
      <StatusBar>
        <Grip $first />
        <Transport>
          <TransportButton aria-label="Play"><Icon size={12}><path d="M4 1l9 7-9 7z" fill="#000" /></Icon></TransportButton>
          <TransportButton aria-label="Step"><Icon size={12}><path d="M1 1h3v14H1zM6 1l9 7-9 7z" fill="#000" /></Icon></TransportButton>
          <TransportButton aria-label="Pause"><Icon size={12}><path d="M3 1h4v14H3zM10 1h4v14h-4z" fill="#000" /></Icon></TransportButton>
          <TransportButton aria-label="Stop"><Icon size={12}><path d="M1 2h13v12H1z" fill="#000" /></Icon></TransportButton>
        </Transport>
        <StatusField $tall $width="101px">
          <Icon size={14} smooth>
            <circle cx="8" cy="8" r="7.500" fill="#10a010" stroke="#045004" />
            <path d="M7 2h3v3H7zM5 6h5v6h2v2H5v-2h2V8H5z" fill="#fff" />
          </Icon>
          10 Message(s)
        </StatusField>
        <StatusDivider />
        <Grip $first />
        <StatusField $grow>Shows the generator types available for circuit simulation.</StatusField>
        <StatusDivider />
        <Grip $first />
        <StatusField $width="98px" />
      </StatusBar>
      <TaskBar>
        <StartButton aria-label="Start"><StartOrb /></StartButton>
        <TaskButton aria-label="Explorer" $open><Explorer /></TaskButton>
        <TaskButton aria-label="Media Player"><MediaPlayer /></TaskButton>
        <TaskButton aria-label="Chrome" $open $stacked><Chrome /></TaskButton>
        <TaskButton aria-label="ISIS" $open $active $stacked><Isis /></TaskButton>
        <TaskButton aria-label="Excel" $open><Excel /></TaskButton>
        <TaskButton aria-label="Photo viewer" $open><Photo /></TaskButton>
        <TaskButton aria-label="Paint" $open><Paint /></TaskButton>
        <Tray>
          <Language>FR</Language>
          <Icon smooth><path d="M4 10l4-4 4 4z" fill="#fff" /></Icon>
          <Icon><path d="M2 1h1v14H2zM4 2h5v2h6l-2 3 1 2H9V8H4z" fill="#fff" /></Icon>
          <Icon>
            <path d="M2.500 3.500h8v11h-8z" stroke="#fff" strokeWidth="2" />
            <path d="M7 4h9v5l-3 3v3h-3v-3L7 9z" fill="#fff" stroke="#1b4b7e" />
            <path d="M9 1h2v4H9zM13 1h2v4h-2z" fill="#fff" />
          </Icon>
          <Icon><path d="M1 11h2v3H1zM4 10h2v4H4zM7 8h2v6H7zM10 5h2v9h-2zM13 2h2v12h-2z" fill="#fff" /></Icon>
          <Icon smooth>
            <path d="M1 5h3l4-4v14l-4-4H1z" fill="#fff" />
            <path d="M10 5c2 2 2 4 0 6M12 3c4 3 4 7 0 10" stroke="#fff" />
          </Icon>
          <Clock><span>16:27</span><span>04/04/2013</span></Clock>
        </Tray>
      </TaskBar>
    </Window>
  </>
)

export default App
